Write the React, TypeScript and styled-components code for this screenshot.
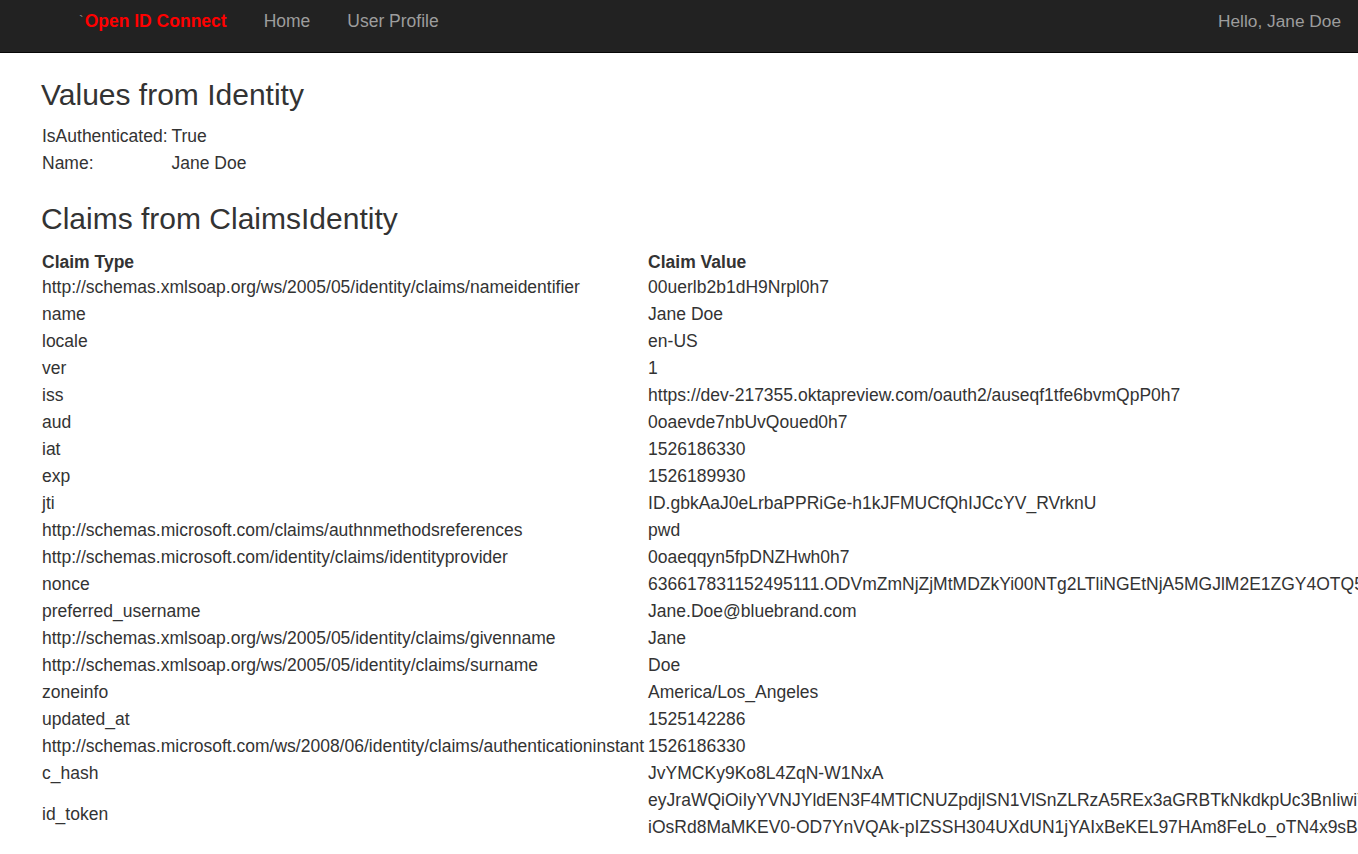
import React from "react";
import styled, { createGlobalStyle } from "styled-components";

const GlobalStyle = createGlobalStyle`
  html, body {
    margin: 0;
    padding: 0;
    overflow: hidden;
    background: #ffffff;
  }
  body {
    font-family: "Liberation Sans", Arial, Helvetica, sans-serif;
    color: #333333;
  }
  * { box-sizing: border-box; }
`;

const Page = styled.div`
  width: 1358px;
  min-height: 854px;
  overflow: hidden;
`;

const Navbar = styled.nav`
  height: 53px;
  background: #222222;
  border-bottom: 1px solid #080808;
  display: flex;
  align-items: flex-start;
  padding: 11px 17px 0 79px;
`;

const Brand = styled.a`
  font-size: 17.5px;
  line-height: 20px;
  font-weight: bold;
  color: #ff0000;
  text-decoration: none;
  white-space: nowrap;
  margin-right: 37px;
`;

const Tick = styled.span`
  color: #8a8a8a;
  font-weight: normal;
  font-size: 14px;
  margin-right: 1px;
  vertical-align: top;
`;

const NavLink = styled.a`
  font-size: 17.5px;
  line-height: 20px;
  color: #9d9d9d;
  text-decoration: none;
  white-space: nowrap;
  margin-right: 37px;
`;

const NavRight = styled.span`
  margin-left: auto;
  font-size: 17.3px;
  line-height: 20px;
  color: #9d9d9d;
  white-space: nowrap;
`;

const Content = styled.main`
  padding: 0 0 0 42px;
`;

const Heading = styled.h2<{ $top: number; $bottom: number }>`
  font-family: "Liberation Sans", Arial, Helvetica, sans-serif;
  font-size: 30px;
  font-weight: 500;
  line-height: 33px;
  color: #333333;
  margin: ${(p) => p.$top}px 0 ${(p) => p.$bottom}px -1px;
`;

const Table = styled.table`
  border-collapse: collapse;
  border-spacing: 0;
  font-size: 17.5px;
  line-height: 27px;
  white-space: nowrap;
`;

const Cell = styled.td<{ $width?: number; $head?: boolean }>`
  padding: ${(p) => (p.$head ? "2px 4px 0 0" : "0 4px 0 0")};
  line-height: ${(p) => (p.$head ? "24px" : "27px")};
  vertical-align: middle;
  text-align: left;
  font-weight: ${(p) => (p.$head ? "bold" : "normal")};
  width: ${(p) => (p.$width ? `${p.$width}px` : "auto")};
  min-width: ${(p) => (p.$width ? `${p.$width}px` : "0")};
`;

const TokenLine = styled.div`
  white-space: nowrap;
`;

const claims: [string, string][] = [
  ["http://schemas.xmlsoap.org/ws/2005/05/identity/claims/nameidentifier", "00uerlb2b1dH9Nrpl0h7"],
  ["name", "Jane Doe"],
  ["locale", "en-US"],
  ["ver", "1"],
  ["iss", "https://dev-217355.oktapreview.com/oauth2/auseqf1tfe6bvmQpP0h7"],
  ["aud", "0oaevde7nbUvQoued0h7"],
  ["iat", "1526186330"],
  ["exp", "1526189930"],
  ["jti", "ID.gbkAaJ0eLrbaPPRiGe-h1kJFMUCfQhIJCcYV_RVrknU"],
  ["http://schemas.microsoft.com/claims/authnmethodsreferences", "pwd"],
  ["http://schemas.microsoft.com/identity/claims/identityprovider", "0oaeqqyn5fpDNZHwh0h7"],
  ["nonce", "636617831152495111.ODVmZmNjZjMtMDZkYi00NTg2LTliNGEtNjA5MGJlM2E1ZGY4OTQ5ZjY3MzQtYmE4Ny00MzQ1LWE0ZjQtYjQ3NGJhYzIxZDI1"],
  ["preferred_username", "Jane.Doe@bluebrand.com"],
  ["http://schemas.xmlsoap.org/ws/2005/05/identity/claims/givenname", "Jane"],
  ["http://schemas.xmlsoap.org/ws/2005/05/identity/claims/surname", "Doe"],
  ["zoneinfo", "America/Los_Angeles"],
  ["updated_at", "1525142286"],
  ["http://schemas.microsoft.com/ws/2008/06/identity/claims/authenticationinstant", "1526186330"],
  ["c_hash", "JvYMCKy9Ko8L4ZqN-W1NxA"],
];

const tokenLines = [
  "eyJraWQiOiIyYVNJYldEN3F4MTlCNUZpdjlSN1VlSnZLRzA5REx3aGRBTkNkdkpUc3BnIiwiYWxnIjoiUlMyNTYifQ.eyJzdWIiOiIwMHVlcmxiMmIxZEg5TnJwbDBoNyIs",
  "iOsRd8MaMKEV0-OD7YnVQAk-pIZSSH304UXdUN1jYAIxBeKEL97HAm8FeLo_oTN4x9sBq3kQz1V7lYwXkP",
];

export default function App() {
  return (
    <Page>
      <GlobalStyle />
      <Navbar>
        <Brand href="#">
          <Tick>`</Tick>Open ID Connect
        </Brand>
        <NavLink href="#">Home</NavLink>
        <NavLink href="#">User Profile</NavLink>
        <NavRight>Hello, Jane Doe</NavRight>
      </Navbar>
      <Content>
        <Heading $top={25} $bottom={12}>Values from Identity</Heading>
        <Table>
          <tbody>
            <tr>
              <Cell $width={128}>IsAuthenticated:</Cell>
              <Cell>True</Cell>
            </tr>
            <tr>
              <Cell $width={128}>Name:</Cell>
              <Cell>Jane Doe</Cell>
            </tr>
          </tbody>
        </Table>
        <Heading $top={25} $bottom={13}>Claims from ClaimsIdentity</Heading>
        <Table>
          <tbody>
            <tr>
              <Cell $width={605} $head>Claim Type</Cell>
              <Cell $head>Claim Value</Cell>
            </tr>
            {claims.map(([type, value]) => (
              <tr key={type}>
                <Cell $width={605}>{type}</Cell>
                <Cell>{value}</Cell>
              </tr>
            ))}
            <tr>
              <Cell $width={605}>id_token</Cell>
              <Cell>
                {tokenLines.map((line) => (
                  <TokenLine key={line}>{line}</TokenLine>
                ))}
              </Cell>
            </tr>
          </tbody>
        </Table>
      </Content>
    </Page>
  );
}
